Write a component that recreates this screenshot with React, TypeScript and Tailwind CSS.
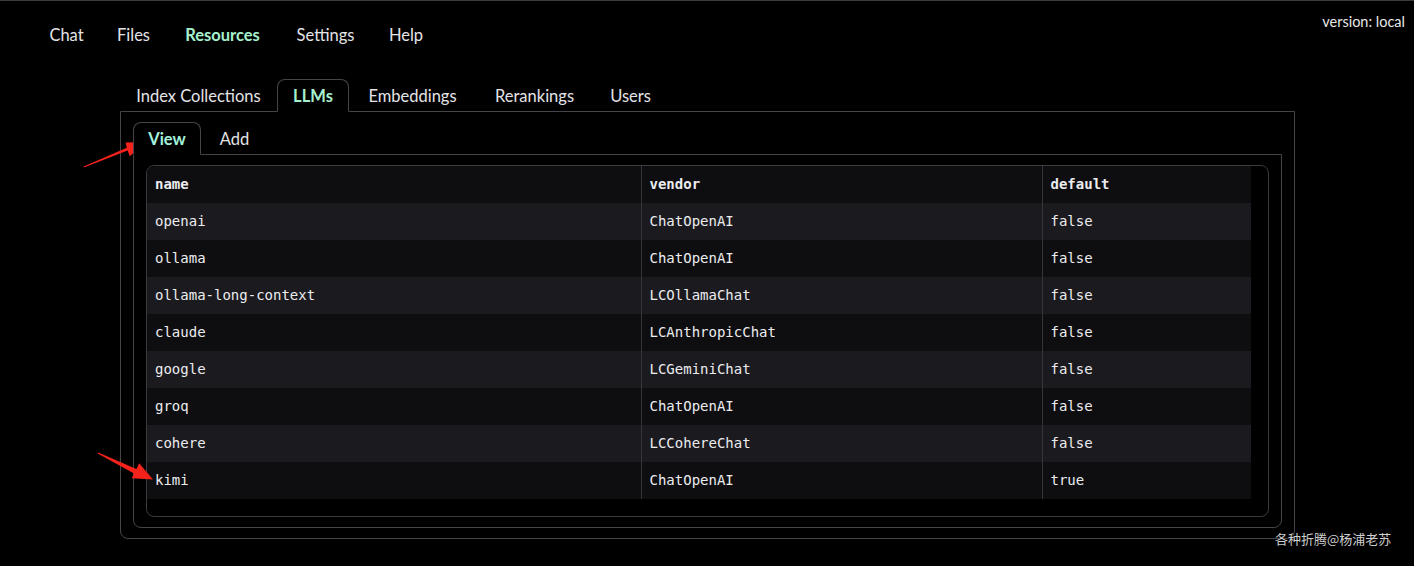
import React from 'react';

const navItems = [
  { label: 'Chat', w: 'w-[69px]' },
  { label: 'Files', w: 'w-[65px]' },
  { label: 'Resources', w: 'w-[113px]' },
  { label: 'Settings', w: 'w-[93px]' },
  { label: 'Help', w: 'w-[68px]' },
];

const topTabs = [
  { label: 'Index Collections', w: 'w-[157px]' },
  { label: 'LLMs', w: 'w-[72px]' },
  { label: 'Embeddings', w: 'w-[127px]' },
  { label: 'Rerankings', w: 'w-[117px]' },
  { label: 'Users', w: 'w-[75px]' },
];

const rows = [
  ['openai', 'ChatOpenAI', 'false'],
  ['ollama', 'ChatOpenAI', 'false'],
  ['ollama-long-context', 'LCOllamaChat', 'false'],
  ['claude', 'LCAnthropicChat', 'false'],
  ['google', 'LCGeminiChat', 'false'],
  ['groq', 'ChatOpenAI', 'false'],
  ['cohere', 'LCCohereChat', 'false'],
  ['kimi', 'ChatOpenAI', 'true'],
];

function Arrows() {
  return (
    <svg className="absolute inset-0 pointer-events-none" width="1414" height="566">
      {/* arrow pointing at View tab */}
      <polygon
        fill="#f5221b"
        points="84,166.6 127.6,149.6 129.8,155.2 146,141 125.6,141.4 126.8,146.8 83.6,165.4"
      />
      {/* arrow pointing at kimi row */}
      <polygon
        fill="#f5221b"
        points="98.3,451.4 136.4,467.9 139.2,462.3 153,478.5 131.7,477.3 134,472.5 97.7,452.6"
      />
    </svg>
  );
}

export default function App() {
  return (
    <div className="relative w-full h-[566px] bg-black border-t border-[#3b3b3b] overflow-hidden font-['Lato','Noto_Sans',sans-serif] text-[#e4e4e7]">
      {/* top nav */}
      <nav className="flex pl-[32px] pt-[13px]">
        {navItems.map((item) => (
          <button
            key={item.label}
            className={
              item.label === 'Resources'
                ? `${item.w} pt-[9px] pb-[7px] text-[16.5px] leading-[24px] font-bold text-[#a7f0cf]`
                : `${item.w} pt-[9px] pb-[7px] text-[16.5px] leading-[24px] text-[#e4e4e7]`
            }
          >
            {item.label}
          </button>
        ))}
      </nav>

      <div className="absolute right-[9px] top-[11px] text-[14.5px] leading-[20px] text-[#e8e8e8]">
        version: local
      </div>

      {/* resources tabs */}
      <div className="ml-[120px] mt-[25px] w-[1175px]">
        <div className="flex h-[32px] relative z-10">
          {topTabs.map((t) =>
            t.label === 'LLMs' ? (
              <div
                key={t.label}
                className={`${t.w} h-[33px] pt-[2px] flex items-center justify-center border border-[#454549] border-b-black rounded-t-[8px] bg-black text-[16.5px] font-bold text-[#a7f0cf]`}
              >
                {t.label}
              </div>
            ) : (
              <div
                key={t.label}
                className={`${t.w} h-[32px] pt-[2px] flex items-center justify-center text-[16.5px] text-[#e4e4e7]`}
              >
                {t.label}
              </div>
            )
          )}
        </div>

        <div className="border border-[#454549] rounded-b-[8px] pt-[10px] pb-[10px] px-[12px]">
          {/* view / add tabs */}
          <div className="flex h-[32px] relative z-10">
            <div className="w-[68px] h-[33px] pt-[2px] flex items-center justify-center border border-[#454549] border-b-black rounded-t-[8px] bg-black text-[16.5px] font-bold text-[#a3f2dc]">
              View
            </div>
            <div className="w-[67px] h-[32px] pt-[2px] flex items-center justify-center text-[16.5px] text-[#e4e4e7]">
              Add
            </div>
          </div>

          <div className="border border-[#454549] rounded-b-[8px] pt-[10px] pb-[10px] px-[12px]">
            <div className="border border-[#3a3a3f] rounded-[8px] overflow-hidden h-[352px] pr-[17px]">
              <table className="w-[1104px] border-collapse font-['DejaVu_Sans_Mono',monospace] text-[14px] text-[#ececef]">
                <thead>
                  <tr className="bg-[#0e0e11] h-[37px]">
                    <th className="w-[494px] text-left font-bold px-[8px]">name</th>
                    <th className="w-[401px] text-left font-bold px-[8px] border-l border-[#35353a]">vendor</th>
                    <th className="text-left font-bold px-[8px] border-l border-[#35353a]">default</th>
                  </tr>
                </thead>
                <tbody>
                  {rows.map((r, i) => (
                    <tr key={r[0]} className={i % 2 === 0 ? 'bg-[#1b1b1f] h-[37px]' : 'bg-[#0e0e11] h-[37px]'}>
                      <td className="px-[8px]">{r[0]}</td>
                      <td className="px-[8px] border-l border-[#35353a]">{r[1]}</td>
                      <td className="px-[8px] border-l border-[#35353a]">{r[2]}</td>
                    </tr>
                  ))}
                </tbody>
              </table>
            </div>
          </div>
        </div>
      </div>

      <div className="absolute left-[1275px] top-[528px] text-[13px] leading-[20px] text-[#cfcfcf] font-['Noto_Sans_CJK_SC',sans-serif]">
        各种折腾@杨浦老苏
      </div>

      <Arrows />
    </div>
  );
}
